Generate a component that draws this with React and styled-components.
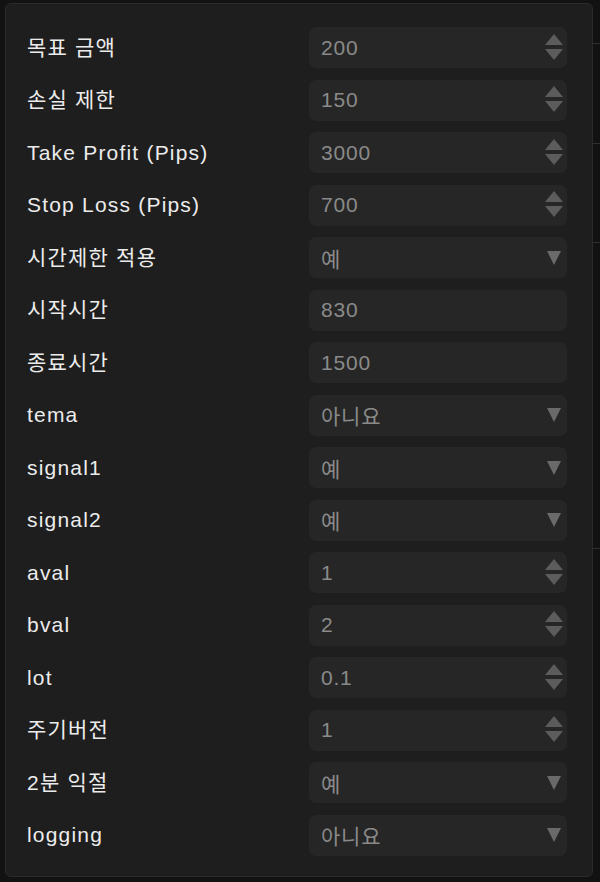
import React from 'react';
import styled, { createGlobalStyle } from 'styled-components';

const GlobalStyle = createGlobalStyle`
  html, body {
    margin: 0;
    padding: 0;
    background: #101010;
  }
  body {
    font-family: "Liberation Sans", "Noto Sans CJK KR", sans-serif;
  }
`;

const Page = styled.div`
  position: relative;
  width: 600px;
  height: 882px;
  overflow: hidden;
  background: #121212;
`;

const ChartLine = styled.div`
  position: absolute;
  right: 0;
  top: ${props => props.top}px;
  width: 8px;
  height: 1px;
  background: #2e2e2e;
`;

const Panel = styled.div`
  position: relative;
  margin: 3px 7px 0 5px;
  width: 588px;
  height: 874px;
  box-sizing: border-box;
  padding: 23px 25px 0 21px;
  background: #1e1e1e;
  border: 1px solid #2a2a2a;
  border-radius: 6px;
  display: grid;
  grid-template-columns: 1fr 258px;
  grid-auto-rows: 41px;
  row-gap: 11.5px;
  align-items: center;
`;

const Label = styled.div`
  color: #ececec;
  font-size: 21px;
  letter-spacing: 1.2px;
  line-height: 24px;
  white-space: nowrap;
`;

const Field = styled.div`
  height: 41px;
  box-sizing: border-box;
  background: #262626;
  border-radius: 7px;
  display: flex;
  align-items: center;
  justify-content: space-between;
  padding: 0 3px 0 12px;
  color: #8a8a8a;
  font-size: 21px;
  letter-spacing: 0.8px;
`;

const IconBox = styled.div`
  width: 20px;
  display: flex;
  justify-content: center;
`;

function Spinner() {
  return (
    <svg width="20" height="28" viewBox="0 0 20 28">
      <polygon points="10,0 19,11 1,11" fill="#5c5c5c" />
      <polygon points="1,15 19,15 10,26" fill="#5c5c5c" />
    </svg>
  );
}

function Caret() {
  return (
    <svg width="16" height="16" viewBox="0 0 16 16">
      <polygon points="1,1 15,1 8,15" fill="#6a6a6a" />
    </svg>
  );
}

const rows = [
  ['목표 금액', '200', 'num'],
  ['손실 제한', '150', 'num'],
  ['Take Profit (Pips)', '3000', 'num'],
  ['Stop Loss (Pips)', '700', 'num'],
  ['시간제한 적용', '예', 'select'],
  ['시작시간', '830', 'text'],
  ['종료시간', '1500', 'text'],
  ['tema', '아니요', 'select'],
  ['signal1', '예', 'select'],
  ['signal2', '예', 'select'],
  ['aval', '1', 'num'],
  ['bval', '2', 'num'],
  ['lot', '0.1', 'num'],
  ['주기버전', '1', 'num'],
  ['2분 익절', '예', 'select'],
  ['logging', '아니요', 'select'],
];

export default function App() {
  return (
    <Page>
      <GlobalStyle />
      <ChartLine top={43} />
      <ChartLine top={143} />
      <ChartLine top={242} />
      <ChartLine top={548} />
      <Panel>
        {rows.map(([label, value, kind]) => (
          <React.Fragment key={label}>
            <Label>{label}</Label>
            <Field>
              <span>{value}</span>
              <IconBox>
                {kind === 'num' && <Spinner />}
                {kind === 'select' && <Caret />}
              </IconBox>
            </Field>
          </React.Fragment>
        ))}
      </Panel>
    </Page>
  );
}
